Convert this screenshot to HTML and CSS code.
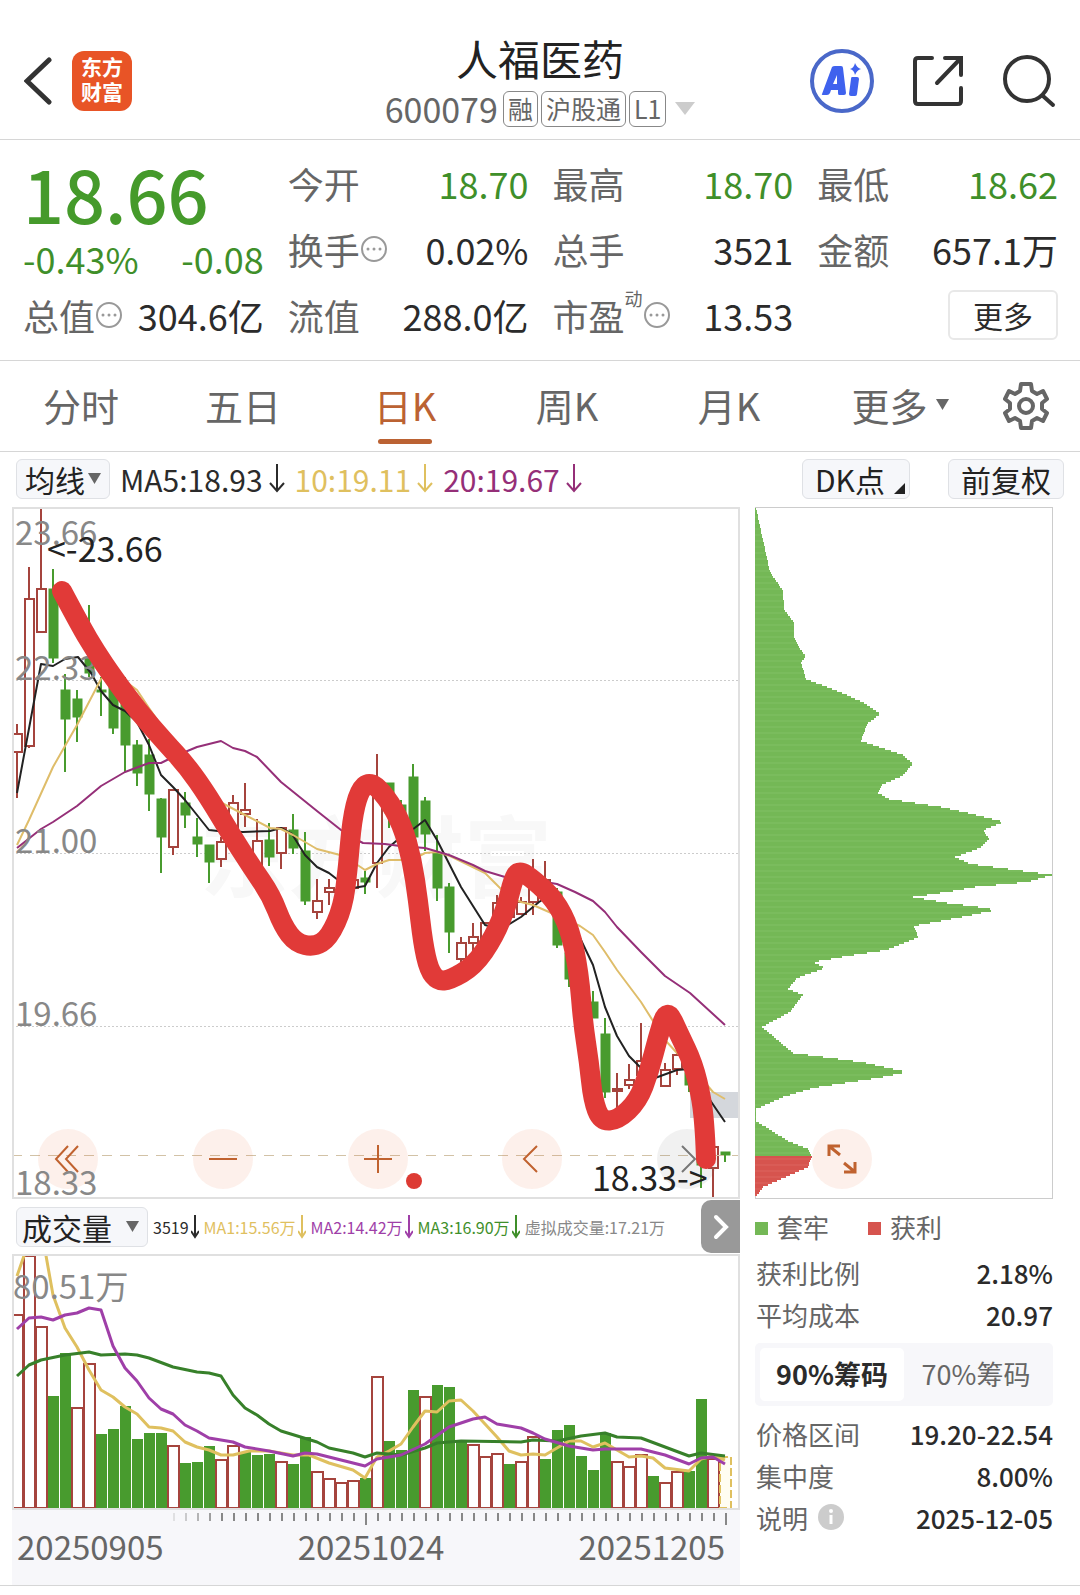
FILE: index.html
```
<!DOCTYPE html>
<html lang="zh-CN">
<head>
    <meta charset="UTF-8">
    <meta name="viewport" content="width=device-width, initial-scale=1">
    <title>人福医药 600079</title>
    <link rel="stylesheet" href="styles.css">
</head>
<body>
<header class="header">
    <div class="headerLeft">
        <button class="iconBtn" aria-label="返回">
            <svg width="30" height="50" viewBox="0 0 30 50" fill="none" stroke="#333" stroke-width="5" stroke-linecap="round"><path d="M25 4 3 25 25 46"/></svg>
        </button>
        <a class="logo" href="#"><span>东方</span><span>财富</span></a>
    </div>
    <div class="headerTitle">
        <h1>人福医药</h1>
        <div class="headerSub">
            <span class="code">600079</span>
            <span class="tag">融</span>
            <span class="tag">沪股通</span>
            <span class="tag">L1</span>
            <svg class="subCaret" width="20" height="13" viewBox="0 0 20 13"><path d="M0 0H20L10 13Z" fill="#ccc"/></svg>
        </div>
    </div>
    <div class="headerRight">
        <button class="iconBtn" aria-label="AI">
            <svg width="64" height="64" viewBox="0 0 64 64">
                <circle cx="32" cy="32" r="30" fill="none" stroke="#4a68c9" stroke-width="4"/>
                <path d="M12 45 22 18Q23 17 25 17H31Q33 17 33 19L36 44Q36 46 34 46H29Q28 46 28 44L28 41H21L20 44Q19 46 17 46H13Q11 46 12 45ZM23 35H27L27 26Z" fill="#3f62ee"/>
                <path d="M42 28H47Q49 28 49 30L47 45Q47 47 45 47H41Q39 47 39 45L41 30Q41 28 42 28Z" fill="#3f62ee"/>
                <path d="M45 14Q47 19 51 20Q47 21 45 26Q44 21 40 20Q44 19 45 14Z" fill="#3f62ee"/>
            </svg>
        </button>
        <button class="iconBtn" aria-label="分享">
            <svg width="52" height="52" viewBox="0 0 52 52" fill="none" stroke="#333" stroke-width="4" stroke-linecap="round"><path d="M20 3H6Q3 3 3 6V46Q3 49 6 49H46Q49 49 49 46V33M49 20V3H33M49 3 25 28"/></svg>
        </button>
        <button class="iconBtn" aria-label="搜索">
            <svg width="54" height="54" viewBox="0 0 54 54" fill="none" stroke="#333" stroke-width="4" stroke-linecap="round"><circle cx="25" cy="25" r="22"/><path d="M41 42 51 51"/></svg>
        </button>
    </div>
</header>

<section class="quote">
    <div class="priceBox">
        <div class="price">18.66</div>
        <div class="change"><span>-0.43%</span><span>-0.08</span></div>
    </div>
    <div class="item"><span class="name">今开</span><span class="val green">18.70</span></div>
    <div class="item"><span class="name">最高</span><span class="val green">18.70</span></div>
    <div class="item"><span class="name">最低</span><span class="val green">18.62</span></div>
    <div class="item"><span class="name">换手<svg class="dots" width="28" height="28" viewBox="0 0 28 28"><circle cx="14" cy="14" r="12"/><path d="M8 14h0M14 14h0M20 14h0"/></svg></span><span class="val">0.02%</span></div>
    <div class="item"><span class="name">总手</span><span class="val">3521</span></div>
    <div class="item"><span class="name">金额</span><span class="val">657.1万</span></div>
    <div class="item"><span class="name">总值<svg class="dots" width="28" height="28" viewBox="0 0 28 28"><circle cx="14" cy="14" r="12"/><path d="M8 14h0M14 14h0M20 14h0"/></svg></span><span class="val">304.6亿</span></div>
    <div class="item"><span class="name">流值</span><span class="val">288.0亿</span></div>
    <div class="item"><span class="name">市盈<sup>动</sup><svg class="dots" width="28" height="28" viewBox="0 0 28 28"><circle cx="14" cy="14" r="12"/><path d="M8 14h0M14 14h0M20 14h0"/></svg></span><span class="val">13.53</span></div>
    <div class="item itemMore"><button class="moreBtn">更多</button></div>
</section>

<nav class="tabs">
    <button>分时</button>
    <button>五日</button>
    <button class="current">日K</button>
    <button>周K</button>
    <button>月K</button>
    <button class="tabMore">更多<svg width="13" height="11" viewBox="0 0 13 11"><path d="M0 0H13L6.500 11Z" fill="#666"/></svg></button>
    <button class="tabSet" aria-label="设置">
        <svg width="46" height="48" viewBox="0 0 46 48" fill="none" stroke="#666" stroke-width="4" stroke-linejoin="round"><path d="M18 2H28L29 9 34 12 40 9 44 17 39 21V27L44 31 40 39 34 36 29 39 28 46H18L17 39 12 36 6 39 2 31 7 27V21L2 17 6 9 12 12 17 9Z"/><circle cx="23" cy="24" r="7"/></svg>
    </button>
</nav>

<div class="maBar">
    <label class="chip"><select aria-label="主图指标"><option>均线</option></select><svg width="13" height="11" viewBox="0 0 13 11"><path d="M0 0H13L6.500 11Z" fill="#666"/></svg></label>
    <span class="ma">MA5:18.93<svg class="down" width="16" height="29" viewBox="0 0 16 29"><path d="M8 0V27M1 19 8 27 15 19"/></svg></span>
    <span class="ma yellow">10:19.11<svg class="down" width="16" height="29" viewBox="0 0 16 29"><path d="M8 0V27M1 19 8 27 15 19"/></svg></span>
    <span class="ma purple">20:19.67<svg class="down" width="16" height="29" viewBox="0 0 16 29"><path d="M8 0V27M1 19 8 27 15 19"/></svg></span>
    <button class="chip dk">DK点<svg width="11" height="11" viewBox="0 0 11 11"><path d="M11 0V11H0Z" fill="#222"/></svg></button>
    <button class="chip">前复权</button>
</div>

<main class="main">
    <div class="left">
        <div class="kline">
            <svg class="chart" id="kline" viewBox="12 507 728 692">
                <text class="watermark" x="200" y="890">东方财富</text>
                <path class="grid" d="M12 680.500H740M12 853.500H740M12 1026.500H740"/>
                <rect x="690" y="1092" width="50" height="26" fill="#d4d7dc"/>
                <g id="candles"></g>
                <g id="klineMa"></g>
                <path class="nowLine" d="M12 1155.500H740"/>
                <rect class="frame" x="13" y="508" width="726" height="690"/>
            </svg>
            <div class="tools">
                <button aria-label="最左"><svg width="30" height="30" viewBox="0 0 30 30"><path d="M15 2 3 15 15 28M25 2 13 15 25 28"/></svg></button>
                <button aria-label="缩小"><svg width="30" height="30" viewBox="0 0 30 30"><path d="M1 15H29"/></svg></button>
                <button aria-label="放大"><svg width="30" height="30" viewBox="0 0 30 30"><path d="M1 15H29M15 1V29"/></svg></button>
                <button aria-label="左移"><svg width="30" height="30" viewBox="0 0 30 30"><path d="M20 2 7 15 20 28"/></svg></button>
                <button class="off" aria-label="右移"><svg width="30" height="30" viewBox="0 0 30 30"><path d="M10 2 23 15 10 28"/></svg></button>
            </div>
            <svg class="chart over" viewBox="12 507 728 692">
                <g class="scale">
                    <text x="15" y="545">23.66</text>
                    <text x="15" y="680">22.33</text>
                    <text x="15" y="853">21.00</text>
                    <text x="15" y="1026">19.66</text>
                    <text x="15" y="1195">18.33</text>
                </g>
                <text class="mark" x="47" y="562">&lt;-23.66</text>
                <circle cx="414" cy="1181" r="8" fill="#dd3a33"/>
                <text class="mark" x="592" y="1191">18.33-&gt;</text>
                <path class="brush" id="brush"/>
            </svg>
        </div>

        <div class="volBar">
            <label class="chip"><select aria-label="副图指标"><option>成交量</option></select><svg width="13" height="11" viewBox="0 0 13 11"><path d="M0 0H13L6.500 11Z" fill="#666"/></svg></label>
            <span>3519<svg class="down" width="8" height="24" viewBox="0 0 8 24"><path d="M4 0V22M0 16 4 22 8 16"/></svg></span>
            <span class="yellow">MA1:15.56万<svg class="down" width="8" height="24" viewBox="0 0 8 24"><path d="M4 0V22M0 16 4 22 8 16"/></svg></span>
            <span class="violet">MA2:14.42万<svg class="down" width="8" height="24" viewBox="0 0 8 24"><path d="M4 0V22M0 16 4 22 8 16"/></svg></span>
            <span class="green">MA3:16.90万<svg class="down" width="8" height="24" viewBox="0 0 8 24"><path d="M4 0V22M0 16 4 22 8 16"/></svg></span>
            <span class="gray">虚拟成交量:17.21万</span>
            <button class="next" aria-label="更多指标"><svg width="16" height="26" viewBox="0 0 16 26"><path d="M3 3 13 13 3 23"/></svg></button>
        </div>

        <svg class="chart" viewBox="12 1254 728 256">
            <g id="volume"></g>
            <g id="volumeMa"></g>
            <rect class="frame" x="13" y="1255" width="726" height="254"/>
            <text class="scaleText" x="13" y="1299">80.51万</text>
        </svg>

        <div class="axis">
            <svg class="chart" viewBox="12 1510 728 18" id="ticks"></svg>
            <div class="dates"><span>20250905</span><span>20251024</span><span>20251205</span></div>
        </div>
    </div>

    <aside class="right">
        <div class="chipChart">
            <svg class="chart" viewBox="755 507 298 692">
                <rect x="755.500" y="507.500" width="297" height="691" fill="none" stroke="#ccc"/>
                <g id="chips"></g>
            </svg>
            <button class="expand" aria-label="展开">
                <svg width="30" height="30" viewBox="0 0 30 30"><path d="M13 11 2 2M2 12V2H13M17 19 28 28M28 18V28H17"/></svg>
            </button>
        </div>
        <div class="legend"><span class="trap">套牢</span><span class="gain">获利</span></div>
        <dl class="info">
            <div><dt>获利比例</dt><dd>2.18%</dd></div>
            <div><dt>平均成本</dt><dd>20.97</dd></div>
        </dl>
        <div class="switch">
            <button class="current">90%筹码</button>
            <button>70%筹码</button>
        </div>
        <dl class="info">
            <div><dt>价格区间</dt><dd>19.20-22.54</dd></div>
            <div><dt>集中度</dt><dd>8.00%</dd></div>
            <div>
                <dt>说明<svg width="26" height="26" viewBox="0 0 26 26"><circle cx="13" cy="13" r="13" fill="#ccc"/><circle cx="13" cy="7" r="2" fill="#fff"/><path d="M13 11V20" stroke="#fff" stroke-width="3"/></svg></dt>
                <dd>2025-12-05</dd>
            </div>
        </dl>
    </aside>
</main>
<script src="script.js"></script>
</body>
</html>
```
FILE: styles.css
```
*{
    margin: 0;
    padding: 0;
    box-sizing: border-box;
}
body{
    background-color: #fff;
    color: #2b2b2b;
    font-family: "Noto Sans CJK SC", "Noto Sans", sans-serif;
    font-size: 36px;
}
button,select{
    font: inherit;
    color: inherit;
    border: 0;
    background: none;
}
select{
    appearance: none;
}
svg{
    display: block;
    flex: none;
}
.green{
    color: #3f8f2a;
}
.yellow{
    color: #dfc05f;
}
.purple{
    color: #952f78;
}
.violet{
    color: #9f3fa8;
}
.gray{
    color: #888;
}

/*顶部*/
.header{
    display: grid;
    grid-template-columns: 1fr auto 1fr;
    align-items: center;
    height: 140px;
    padding: 22px 24px 0;
    border-bottom: 1px solid #d6d6d6;
}
.headerLeft,
.headerRight{
    display: flex;
    align-items: center;
}
.headerLeft{
    gap: 18px;
}
.headerRight{
    justify-content: flex-end;
    gap: 38px;
}
.logo{
    display: flex;
    flex-direction: column;
    align-items: center;
    justify-content: center;
    width: 60px;
    height: 60px;
    padding-bottom: 4px;
    border-radius: 12px;
    background-color: #e85426;
    color: #fff;
    font-size: 21px;
    font-weight: bold;
    line-height: 25px;
    text-decoration: none;
}
.headerTitle{
    padding-top: 6px;
}
.headerTitle h1{
    font-size: 42px;
    font-weight: normal;
    line-height: 50px;
    text-align: center;
    color: #222;
}
.headerSub{
    display: flex;
    align-items: center;
    gap: 3px;
    height: 52px;
    color: #666;
}
.code{
    margin-right: 2px;
    font-size: 34px;
}
.tag{
    height: 36px;
    padding: 0 4px;
    border: 1px solid #888;
    border-radius: 6px;
    font-size: 25px;
    line-height: 33px;
}
.subCaret{
    margin-left: 6px;
}

/*行情*/
.quote{
    display: grid;
    grid-template-columns: repeat(4, 1fr);
    grid-auto-rows: 66px;
    column-gap: 24px;
    padding: 10px 22px 12px 23px;
    border-bottom: 1px solid #d6d6d6;
}
.priceBox{
    grid-row: span 2;
    color: #459a2b;
}
.price{
    font-size: 72px;
    font-weight: 500;
    line-height: 86px;
}
.change{
    display: flex;
    justify-content: space-between;
    line-height: 44px;
    color: #3f8f2a;
}
.item{
    display: flex;
    align-items: center;
    justify-content: space-between;
    white-space: nowrap;
}
.name{
    display: flex;
    align-items: center;
    color: #666;
}
.name sup{
    align-self: flex-start;
    font-size: 18px;
    line-height: 18px;
}
.dots{
    fill: none;
    stroke: #999;
    stroke-width: 2;
}
.dots path{
    stroke-width: 3;
    stroke-linecap: round;
}
.itemMore{
    justify-content: flex-end;
}
.moreBtn{
    width: 110px;
    height: 50px;
    border: 2px solid #e8e8e8;
    border-radius: 6px;
    font-size: 30px;
    line-height: 42px;
}

/*周期切换*/
.tabs{
    display: grid;
    grid-template-columns: repeat(5, 9fr) 10fr 5fr;
    height: 91px;
    border-bottom: 1px solid #d6d6d6;
    color: #666;
    font-size: 38px;
}
.tabs button{
    position: relative;
    display: flex;
    align-items: center;
    justify-content: center;
    padding-bottom: 4px;
    white-space: nowrap;
}
.tabs .tabMore{
    gap: 8px;
}
.tabs .tabSet{
    padding: 0 18px 0 0;
}
.tabs .current{
    color: #bb6233;
}
.tabs .current::after{
    content: '';
    position: absolute;
    left: 50%;
    bottom: 7px;
    width: 54px;
    height: 5px;
    margin-left: -27px;
    border-radius: 3px;
    background-color: #bb6233;
}

/*均线*/
.chip{
    display: flex;
    align-items: center;
    gap: 3px;
    height: 40px;
    padding: 0 8px;
    border: 1px solid #dfe1e5;
    border-radius: 6px;
    background-color: #f6f7fa;
    color: #222;
    font-size: 30px;
    line-height: 36px;
    white-space: nowrap;
}
.maBar{
    display: flex;
    align-items: center;
    gap: 10px;
    height: 55px;
    padding: 0 16px 2px;
    font-size: 30px;
}
.ma{
    display: flex;
    align-items: center;
    gap: 6px;
}
.down{
    fill: none;
    stroke: currentColor;
    stroke-width: 2;
}
button.chip{
    padding: 0 12px;
}
.dk{
    margin-left: auto;
    margin-right: 28px;
}
.dk svg{
    align-self: flex-end;
    margin: 0 -8px 4px 6px;
}

/*图表*/
.main{
    display: grid;
    grid-template-columns: 728fr 298fr;
    column-gap: 15px;
    padding: 0 27px 0 12px;
    border-bottom: 1px solid #d6d6d6;
}
.left,
.right{
    min-width: 0;
}
.chart{
    width: 100%;
    height: auto;
}
.kline,
.chipChart{
    position: relative;
}
.frame{
    fill: none;
    stroke: #e0e0e0;
    stroke-width: 2;
}
.grid{
    stroke: #ccc;
    stroke-dasharray: 2 2;
}
.nowLine{
    stroke: #d2c2a6;
    stroke-dasharray: 10 8;
}
.watermark{
    font-size: 88px;
    font-weight: bold;
    fill: #f8f8f8;
}
.line{
    fill: none;
    stroke-width: 2;
    stroke-linejoin: round;
}
#volumeMa .line{
    stroke-width: 3;
}
.up{
    fill: #fff;
    stroke: #a5443d;
    stroke-width: 2;
}
.fall{
    fill: #489b2e;
    stroke: #489b2e;
}
#volume .fall{
    stroke: none;
}
.wickUp{
    stroke: #a5443d;
    stroke-width: 2;
}
.wickFall{
    stroke: #489b2e;
    stroke-width: 2;
}
.guess{
    fill: #fffdf2;
    stroke: #dfc05f;
    stroke-width: 2;
    stroke-dasharray: 8 3;
}
.tools{
    position: absolute;
    left: 26px;
    right: 23px;
    bottom: 10px;
    display: flex;
    justify-content: space-between;
}
.tools button,
.expand{
    display: flex;
    align-items: center;
    justify-content: center;
    width: 60px;
    height: 60px;
    border-radius: 50%;
    background-color: rgba(232, 110, 60, .1);
}
.tools path,
.expand path{
    fill: none;
    stroke: #c0622f;
    stroke-width: 2;
}
.expand path{
    stroke-width: 3;
}
.tools .off{
    background-color: rgba(120, 120, 120, .1);
}
.tools .off path{
    stroke: #777;
}
.expand{
    position: absolute;
    left: 19%;
    bottom: 10px;
}
.over{
    position: absolute;
    left: 0;
    top: 0;
    pointer-events: none;
}
.scale,
.scaleText{
    font-size: 33px;
    fill: #888;
}
.mark{
    font-size: 34px;
    fill: #222;
}
.brush{
    fill: none;
    stroke: #e13a38;
    stroke-width: 20;
    stroke-linecap: round;
    stroke-linejoin: round;
}

/*成交量*/
.volBar{
    display: flex;
    align-items: center;
    gap: 5px;
    height: 55px;
    padding-left: 4px;
    font-size: 16px;
    white-space: nowrap;
}
.volBar .chip{
    gap: 14px;
    padding: 0 8px 0 5px;
}
.volBar span{
    display: flex;
    align-items: center;
    gap: 2px;
}
.next{
    display: flex;
    align-items: center;
    justify-content: center;
    width: 39px;
    height: 53px;
    margin-left: auto;
    border-radius: 10px 0 0 10px;
    background-color: #999;
}
.next path{
    fill: none;
    stroke: #fff;
    stroke-width: 4;
    stroke-linecap: round;
}
.axis{
    height: 75px;
    background-color: #f7f7fa;
}
.tick{
    stroke: #888;
    stroke-width: 2;
}
.dates{
    display: flex;
    justify-content: space-between;
    padding: 0 15px 0 5px;
    color: #666;
    font-size: 33px;
    line-height: 36px;
}

/*筹码*/
.legend{
    display: flex;
    gap: 39px;
    height: 52px;
    color: #666;
    font-size: 26px;
    line-height: 56px;
}
.legend span::before{
    content: '';
    display: inline-block;
    width: 13px;
    height: 13px;
    margin-right: 9px;
    vertical-align: 3px;
    background-color: #74b856;
}
.legend .gain::before{
    background-color: #d6544e;
}
.info div{
    display: flex;
    align-items: center;
    justify-content: space-between;
    height: 42px;
}
.info dt{
    display: flex;
    align-items: center;
    gap: 10px;
    padding-left: 1px;
    color: #666;
    font-size: 26px;
}
.info dd{
    font-size: 26px;
    font-weight: 500;
}
.switch{
    display: flex;
    height: 63px;
    margin: 8px 0 6px;
    padding: 5px;
    border-radius: 5px;
    background-color: #f7f7fa;
    color: #666;
    font-size: 27px;
}
.switch button{
    flex: 1;
    padding-bottom: 3px;
    border-radius: 5px;
    white-space: nowrap;
}
.switch .current{
    background-color: #fff;
    color: #2b2b2b;
    font-weight: bold;
}
```
FILE: script.js
```
var NS = 'http://www.w3.org/2000/svg';
function add(parent, tag, attrs) {
    var el = document.createElementNS(NS, tag);
    for (var k in attrs) {
        el.setAttribute(k, attrs[k]);
    }
    parent.appendChild(el);
}
function byId(id) {
    return document.getElementById(id);
}
//第i根K线的中心x
function cx(i) {
    return 17 + 12 * i;
}

//K线：[涨跌, 最高, 最低, 实体上沿, 实体下沿]
var candles = [
    ['r',724,798,734,752],['r',567,748,599,746],['r',507,632,589,632],['g',569,663,589,658],['g',674,772,690,719],
    ['g',690,742,699,717],['g',605,677,658,673],['g',677,716,690,692],['g',680,734,683,728],['g',677,772,690,745],
    ['g',740,786,745,773],['g',739,811,755,794],['g',798,873,799,837],['r',790,855,790,847],['g',792,828,803,815],
    ['g',818,857,837,844],['g',845,883,845,862],['r',837,867,842,859],['r',795,833,803,830],['r',783,827,810,814],
    ['r',819,875,841,875],['g',823,866,840,857],['r',828,869,828,853],['g',814,854,830,848],['g',832,905,851,901],
    ['r',879,919,901,912],['r',879,905,888,892],['r',875,893,884,890],['r',878,892,880,888],['g',871,894,878,882],
    ['r',754,888,790,863],['g',783,828,783,813],['g',800,835,805,830],['g',764,837,777,837],['g',797,851,801,834],
    ['g',835,901,853,888],['g',883,953,887,932],['r',937,962,943,959],['r',923,957,937,943],['r',922,947,923,947],
    ['r',895,920,903,920],['r',895,917,897,917],['r',897,915,902,914],['r',859,915,880,902],['r',861,897,880,897],
    ['g',888,948,892,945],['g',953,987,953,979],['g',975,1000,980,1000],['g',991,1018,1002,1018],['g',1018,1098,1034,1092],
    ['r',1073,1110,1089,1091],['r',1064,1089,1080,1085],['r',1023,1077,1061,1075],['r',1048,1072,1050,1070],['r',1063,1087,1070,1086],
    ['r',1053,1075,1055,1069],['g',1068,1092,1073,1085],['g',1110,1188,1120,1165],['r',1145,1199,1147,1168],['g',1152,1162,1152,1155]
];
var box = byId('candles');
candles.forEach(function (c, i) {
    var x = cx(i);
    var up = c[0] === 'r';
    add(box, 'path', {
        'class': up ? 'wickUp' : 'wickFall',
        d: 'M' + x + ' ' + c[1] + 'V' + c[3] + 'M' + x + ' ' + c[4] + 'V' + c[2]
    });
    add(box, 'rect', {
        'class': up ? 'up' : 'fall',
        x: x - 4, y: c[3], width: 9, height: c[4] - c[3]
    });
});

//均线
function line(id, color, points) {
    add(byId(id), 'polyline', {'class': 'line', stroke: color, points: points});
}
line('klineMa', '#222', '17,793 41,664 53,666 65,659 78,657 91,673 101,691 113,705 125,711 137,722 149,745 161,775 173,787 185,800 209,830 218,831 243,832 270,831 281,828 292,834 305,855 317,867 329,873 338,880 353,888 365,886 377,863 389,847 401,837 412,830 425,820 437,840 461,887 485,925 497,928 508,925 521,917 539,902 550,895 565,910 580,938 593,965 605,1007 617,1036 629,1056 641,1068 655,1078 677,1070 690,1069 700,1085 712,1103 725,1122');
line('klineMa', '#dfbd6a', '17,845 29,820 53,767 77,725 101,679 113,672 137,690 149,708 185,760 210,790 222,803 245,815 270,828 281,829 293,835 317,849 340,855 353,862 365,870 377,864 389,860 412,860 425,853 437,852 450,856 485,873 497,885 509,897 521,902 533,905 549,912 580,926 593,935 605,952 617,970 641,1002 665,1040 677,1053 690,1062 707,1085 713,1092 725,1099');
line('klineMa', '#952f78', '17,848 41,829 53,822 77,806 101,786 125,772 149,763 161,763 173,757 197,747 221,741 233,748 245,751 257,757 281,782 317,811 341,830 353,838 363,843 385,844 400,846 425,848 449,855 473,865 485,871 505,877 533,880 557,884 575,892 593,901 605,912 617,927 641,952 665,976 690,993 725,1025');

//手绘走势，用中点二次曲线平滑
var brush = [
    [62,591],[80,625],[96,652],[113,677],[138,711],[165,742],[187,766],[208,796],[230,833],[251,866],[271,895],[283,926],[296,943],[314,947],[329,938],
    [343,907],[348,867],[352,820],[359,791],[370,781],[386,796],[402,824],[412,860],[418,900],[423,943],[429,970],[438,981],
    [450,980],[474,966],[494,937],[507,905],[513,880],[519,870],[534,880],[555,900],[570,929],[579,973],[583,1023],[589,1062],
    [593,1100],[601,1121],[618,1120],[638,1101],[649,1072],[658,1037],[667,1008],[679,1034],[693,1063],[702,1100],[705,1133],[706,1159]
];
var d = 'M' + brush[0];
for (var i = 1; i < brush.length - 1; i++) {
    var mx = (brush[i][0] + brush[i + 1][0]) / 2;
    var my = (brush[i][1] + brush[i + 1][1]) / 2;
    d += 'Q' + brush[i] + ' ' + mx + ' ' + my;
}
d += 'L' + brush[brush.length - 1];
byId('brush').setAttribute('d', d);

//成交量柱：涨跌 + 柱顶y
var volume = ('r1314 r1255 r1326 g1396 g1353 r1407 r1363 g1434 g1429 g1406 g1439 g1433 g1433 r1445 g1463 g1462 g1446 r1459 r1445 g1452 ' +
    'g1455 g1454 r1461 g1464 g1437 r1471 r1478 r1482 r1480 g1478 r1376 g1441 g1450 g1390 r1396 g1385 g1387 g1441 r1444 r1456 ' +
    'r1453 g1464 r1461 r1436 g1459 g1430 g1425 g1456 g1470 g1433 r1461 r1466 r1454 g1476 r1482 r1471 g1471 g1399 r1458 y1456').split(' ');
volume.forEach(function (v, i) {
    var top = +v.slice(1);
    var names = {r: 'up', g: 'fall', y: 'guess'};
    var pad = v[0] === 'g' ? 0 : 1;
    add(byId('volume'), 'rect', {
        'class': names[v[0]],
        x: cx(i) - 5, y: top + pad, width: 11, height: 1508 - top - pad
    });
});
line('volumeMa', '#dfc05f', '17,1276 26,1250 45,1250 53,1295 65,1328 77,1347 89,1370 101,1390 113,1397 125,1407 137,1414 149,1427 161,1428 173,1431 185,1442 197,1447 209,1450 221,1455 233,1455 249,1451 269,1451 293,1455 309,1455 329,1463 353,1470 365,1478 377,1457 389,1451 401,1444 413,1427 425,1411 437,1412 449,1401 461,1400 473,1411 497,1437 509,1451 521,1455 533,1454 545,1455 569,1441 581,1441 593,1447 605,1443 617,1450 629,1457 641,1456 653,1458 665,1468 689,1471 701,1459 713,1456 725,1460');
line('volumeMa', '#37802a', '17,1376 29,1365 41,1360 65,1355 89,1352 101,1355 125,1354 137,1355 149,1358 173,1367 197,1372 209,1373 221,1376 233,1395 245,1408 257,1415 269,1424 281,1431 317,1442 329,1448 353,1453 365,1457 377,1453 401,1455 425,1448 437,1443 461,1441 521,1442 533,1440 557,1441 581,1436 605,1433 617,1437 641,1438 665,1447 689,1456 701,1453 725,1456');
line('volumeMa', '#9f3fa8', '17,1329 29,1318 41,1317 53,1320 65,1315 77,1313 89,1308 101,1310 113,1346 125,1368 137,1381 149,1398 161,1409 173,1414 185,1425 197,1431 209,1438 233,1442 245,1447 269,1451 293,1456 305,1453 317,1454 341,1460 365,1466 377,1459 401,1455 425,1444 449,1427 473,1419 485,1417 497,1424 509,1426 521,1428 533,1433 545,1439 569,1446 593,1450 605,1449 641,1449 665,1455 689,1464 701,1458 713,1457 725,1464');

//时间刻度
for (var t = 13; t < 60; t++) {
    var big = t === 29 || t === 59;
    add(byId('ticks'), 'path', {
        'class': 'tick',
        d: 'M' + (18 + 12 * t) + ' 1513V' + (big ? 1525 : 1521),
        opacity: Math.min(1, (t - 12) / 5)
    });
}

//筹码分布轮廓
var chips = [
    [756,507],[770,571],[783,590],[784,608],[794,622],[794,635],[799,647],[806,655],[801,662],[806,678],[840,691],[862,701],
    [880,713],[867,723],[861,740],[885,748],[903,754],[913,763],[902,775],[882,784],[878,792],[889,798],[941,806],[968,812],
    [1004,821],[983,829],[989,838],[980,847],[955,856],[970,863],[1000,867],[1023,870],[1052,874],[1027,881],[975,886],[947,891],
    [913,896],[947,902],[978,906],[996,909],[962,916],[914,925],[918,936],[907,941],[886,949],[848,955],[813,961],[825,967],
    [797,977],[788,988],[803,994],[790,1011],[762,1026],[793,1052],[823,1056],[861,1061],[907,1071],[878,1077],[845,1082],
    [813,1087],[783,1096],[756,1108],[756,1120],[788,1140],[808,1148],[812,1155],[808,1166],[763,1186],[756,1196]
];
var k = 0;
for (var y = 508; y < 1196; y += 2) {
    while (chips[k + 1][1] < y) {
        k++;
    }
    var a = chips[k], b = chips[k + 1];
    var w = a[0] + (b[0] - a[0]) * (y - a[1]) / (b[1] - a[1]) - 755;
    var green = y < 1155;
    add(byId('chips'), 'rect', {
        x: 755, y: y, width: Math.round(w), height: 2,
        fill: y % 6 === 0 ? (green ? '#7abc5d' : '#d95c56') : (green ? '#74b856' : '#d6544e')
    });
}
```
